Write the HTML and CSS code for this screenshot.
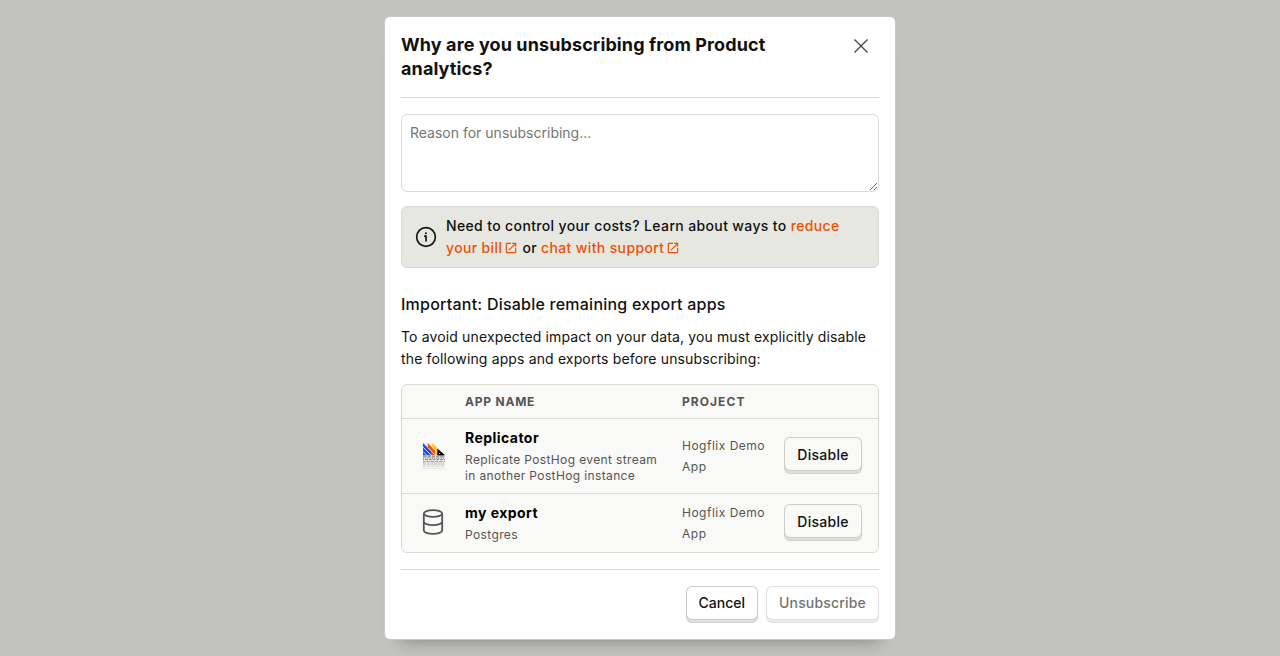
FILE: index.html
```html
<!DOCTYPE html>
<html lang="en">
<head>
<meta charset="utf-8">
<title>Unsubscribe</title>
<link rel="stylesheet" href="styles.css">
</head>
<body>
<svg width="0" height="0" class="defs">
  <symbol id="external" viewBox="0 0 24 24"><path fill="currentColor" d="M19 19H5V5h7V3H5a2 2 0 0 0-2 2v14a2 2 0 0 0 2 2h14c1.1 0 2-.9 2-2v-7h-2v7zM14 3v2h3.590l-9.830 9.830 1.410 1.410L19 6.410V10h2V3h-7z"/></symbol>
</svg>
<div class="modal" role="dialog">
  <header class="modal-header">
    <h3 class="title">Why are you unsubscribing from Product analytics?</h3>
    <svg class="close" viewBox="0 0 16 16"><path d="M1.500 1.500l13 13M14.500 1.500l-13 13" stroke="#444" stroke-width="1.300" fill="none"/></svg>
  </header>
  <section class="modal-content">
    <textarea class="reason" placeholder="Reason for unsubscribing..."></textarea>
    <div class="banner">
      <svg class="info" viewBox="0 0 24 24" fill="none" stroke="#111" stroke-width="1.800"><circle cx="12" cy="12" r="10.200"/><path d="M10 11h2v6" stroke-width="1.800"/><circle cx="11.900" cy="7.900" r="1.100" fill="#111" stroke="none"/></svg>
      <p class="banner-text">Need to control your costs? Learn about ways to <a class="link">reduce your bill<svg class="ext"><use href="#external"/></svg></a> or <a class="link">chat with support<svg class="ext"><use href="#external"/></svg></a></p>
    </div>
    <h4 class="subtitle">Important: Disable remaining export apps</h4>
    <p class="note">To avoid unexpected impact on your data, you must explicitly disable the following apps and exports before unsubscribing:</p>
    <div class="table">
      <div class="row head"><span></span><span>App name</span><span class="head-project">Project</span><span></span></div>
      <div class="row first">
        <svg class="hog" viewBox="0 0 22 26">
          <path fill="#1d4aff" d="M0 0l8 8v4.500H0z"/><path fill="#f54e00" d="M4.700 0l7.500 7.500v5H8V8L4.700 4.700z"/><path fill="#f9bd2b" d="M9.300 0l5 5v7.500h-2V7.500l-3-3z"/>
          <path d="M0 4l8.500 8.500M0 8.500l4 4M4.700 4.500l8 8M9.300 4.500l5 5" stroke="#f9f9f7" stroke-width=".8"/>
          <path fill="#000" d="M14.300 5.500l7 6v1h-7z"/><circle cx="16.700" cy="10.500" r=".6" fill="#fff"/>
          <path d="M0 13.900h22" stroke="#555" stroke-width=".9" stroke-dasharray="3.500 .8"/>
          <path d="M0 15.300h22" stroke="#888" stroke-width="1" stroke-dasharray="1.200 1"/>
          <path d="M0 16.700h22" stroke="#666" stroke-width=".9" stroke-dasharray="2.800 .9" stroke-dashoffset="1.500"/>
          <path d="M0 18.500h22" stroke="#999" stroke-width=".9" stroke-dasharray="3.500 .8" stroke-dashoffset="1"/>
          <path d="M0 19.800h22" stroke="#b5b5b5" stroke-width="1" stroke-dasharray="1.200 1"/>
          <path d="M0 21.100h22" stroke="#aaa" stroke-width=".9" stroke-dasharray="2.800 .9"/>
          <path d="M0 23h22" stroke="#c4c4c4" stroke-width=".9" stroke-dasharray="3.500 .8"/>
          <path d="M0 25.200h22" stroke="#ddd" stroke-width="1" stroke-dasharray="2.800 .9"/>
        </svg>
        <div class="app"><div class="name">Replicator</div><div class="desc">Replicate PostHog event stream in another PostHog instance</div></div>
        <div class="project">Hogflix Demo App</div>
        <button class="btn disable">Disable</button>
      </div>
      <div class="row second">
        <svg class="db" viewBox="0 0 22 26" fill="none" stroke="#555" stroke-width="1.800"><ellipse cx="11" cy="4.500" rx="9.200" ry="3.400"/><path d="M1.800 4.500v17c0 1.900 4.100 3.400 9.200 3.400s9.200-1.500 9.200-3.400v-17M1.800 12.800c0 1.900 4.100 3.400 9.200 3.400s9.200-1.500 9.200-3.400"/></svg>
        <div class="app"><div class="name">my export</div><div class="desc">Postgres</div></div>
        <div class="project">Hogflix Demo App</div>
        <button class="btn disable">Disable</button>
      </div>
    </div>
  </section>
  <footer class="modal-footer">
    <button class="btn white">Cancel</button>
    <button class="btn white disabled">Unsubscribe</button>
  </footer>
</div>
</body>
</html>
```

FILE: styles.css
```css
* { box-sizing: border-box; margin: 0; }
body {
  height: 656px;
  display: flex;
  align-items: center;
  justify-content: center;
  overflow: hidden;
  background: #c2c3bd;
  color: #111;
  font: 14px/22px Inter, sans-serif;
}
.defs { position: absolute; }
.modal {
  width: 512px;
  height: 624px;
  padding: 16px;
  background: #fff;
  border: 1px solid #c9cac7;
  border-radius: 6px;
  box-shadow: 0 16px 16px -16px rgba(0, 0, 0, .35);
}
.modal-header {
  display: flex;
  justify-content: space-between;
  height: 65px;
  border-bottom: 1px solid #d8d8d6;
}
.title { width: 400px; font-size: 18px; line-height: 24px; font-weight: 700; letter-spacing: .11px; }
.close { width: 16px; height: 16px; margin: 5px 10px 0 0; }
.modal-content { height: 472px; padding-top: 16px; border-bottom: 1px solid #d8d8d6; }
.reason {
  display: block;
  width: 100%;
  height: 78px;
  padding: 8px;
  border: 1px solid #dadbd3;
  border-radius: 6px;
  background: #fff;
  font: 14px/20px Inter, sans-serif;
  outline: 0;
}
.reason::placeholder { color: #757575; }
.banner {
  display: flex;
  align-items: center;
  height: 62px;
  margin-top: 14px;
  padding: 0 13px;
  background: #e5e7e0;
  border: 1px solid #d9dad2;
  border-radius: 6px;
  font-weight: 500;
  letter-spacing: .36px;
}
.info { flex: none; width: 22px; height: 22px; margin-right: 9px; }
.link { color: #f54e00; }
.ext { width: 14px; height: 14px; margin-left: 2px; vertical-align: -2px; }
.subtitle { margin-top: 24px; font-size: 16px; line-height: 24px; font-weight: 500; letter-spacing: .23px; }
.note { margin-top: 10px; letter-spacing: .14px; }
.table {
  margin-top: 14px;
  border: 1px solid #dadbd3;
  border-radius: 6px;
  background: #f9f9f7;
}
.row {
  display: grid;
  grid-template-columns: 63px 217px 102px 78px;
  align-items: center;
}
.head {
  height: 33px;
  color: #555;
  font-size: 12px;
  font-weight: 700;
  letter-spacing: .78px;
  text-transform: uppercase;
}
.head-project { letter-spacing: 1.05px; }
.first, .second { border-top: 1px solid #dadbd3; }
.first { height: 75px; }
.second { height: 59px; }
.hog, .db { width: 22px; height: 26px; margin-left: 20px; }
.hog { margin-left: 21px; }
.db { margin-bottom: 2px; }
.app { padding-bottom: 2px; }
.name { line-height: 22px; font-weight: 700; color: #000; letter-spacing: .45px; }
.desc { width: 200px; margin-top: 3px; font-size: 12px; line-height: 16px; color: #555; letter-spacing: .37px; }
.project { width: 90px; font-size: 12px; line-height: 21px; color: #555; letter-spacing: .5px; }
.btn {
  height: 37px;
  padding: 0 12px 3px;
  border: 1px solid #ccc;
  border-bottom-color: #d2d0d0;
  border-radius: 6px;
  background: #f9f9f7;
  box-shadow: inset 0 -2px #e1dddd, inset 0 -3px #ccc;
  font: 500 14px/20px Inter, sans-serif;
  color: #111;
}
.disable { margin-bottom: 2px; padding: 0 0 1px; letter-spacing: .28px; }
.white { background: #fff; }
.disabled { opacity: .6; letter-spacing: .18px; }
.modal-footer { display: flex; justify-content: flex-end; gap: 8px; padding-top: 16px; }
```
